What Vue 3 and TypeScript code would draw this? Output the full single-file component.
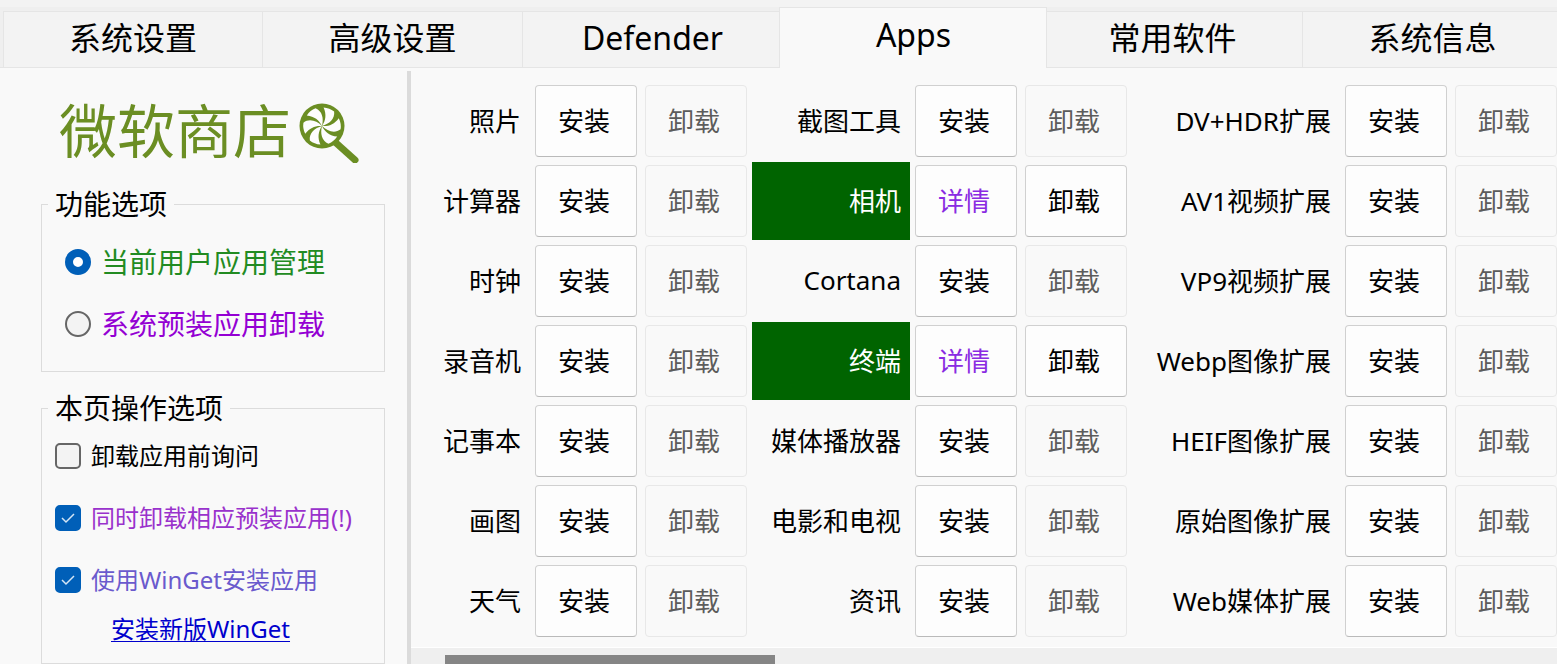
<script setup lang="ts">
import { ref } from 'vue'

interface AppEntry {
  name: string
  installed?: boolean
}

const tabs: string[] = ['系统设置', '高级设置', 'Defender', 'Apps', '常用软件', '系统信息']
const activeTab = ref<string>('Apps')

const scope = ref<string>('current')
const askFirst = ref<boolean>(false)
const removeProvisioned = ref<boolean>(true)
const useWinget = ref<boolean>(true)

const rows: AppEntry[][] = [
  [{ name: '照片' }, { name: '截图工具' }, { name: 'DV+HDR扩展' }],
  [{ name: '计算器' }, { name: '相机', installed: true }, { name: 'AV1视频扩展' }],
  [{ name: '时钟' }, { name: 'Cortana' }, { name: 'VP9视频扩展' }],
  [{ name: '录音机' }, { name: '终端', installed: true }, { name: 'Webp图像扩展' }],
  [{ name: '记事本' }, { name: '媒体播放器' }, { name: 'HEIF图像扩展' }],
  [{ name: '画图' }, { name: '电影和电视' }, { name: '原始图像扩展' }],
  [{ name: '天气' }, { name: '资讯' }, { name: 'Web媒体扩展' }],
]
const apps: AppEntry[] = rows.flat()

const blades: number[] = [8, 68, 128, 188, 248, 308]
</script>

<template>
  <div class="window">
    <nav class="tabs" role="tablist">
      <button
        v-for="tab in tabs"
        :key="tab"
        type="button"
        role="tab"
        class="tab"
        :class="{ active: tab === activeTab }"
        :aria-selected="tab === activeTab"
        @click="activeTab = tab"
      >
        {{ tab }}
      </button>
    </nav>

    <div class="content">
      <aside class="sidebar">
        <h1 class="title">
          <span>微软商店</span>
          <svg class="lollipop" viewBox="0 0 60 60" aria-hidden="true">
            <path d="M36 39 L56 57" stroke="#6b8e23" stroke-width="7" stroke-linecap="round" />
            <circle cx="23" cy="23" r="22.5" fill="#6b8e23" />
            <g transform="translate(23 23)" fill="#fdfdfd">
              <path
                v-for="angle in blades"
                :key="angle"
                :transform="`rotate(${angle})`"
                d="M0 0 C3 -6 3 -12 -1 -18.5 Q5 -19 10 -16 C12 -9 7 -3 0 0 Z"
              />
            </g>
          </svg>
        </h1>

        <fieldset class="group scope">
          <legend>功能选项</legend>
          <label class="option green">
            <input v-model="scope" type="radio" name="scope" value="current" />
            <span>当前用户应用管理</span>
          </label>
          <label class="option violet">
            <input v-model="scope" type="radio" name="scope" value="system" />
            <span>系统预装应用卸载</span>
          </label>
        </fieldset>

        <fieldset class="group page-options">
          <legend>本页操作选项</legend>
          <label class="option">
            <input v-model="askFirst" type="checkbox" />
            <span>卸载应用前询问</span>
          </label>
          <label class="option orchid">
            <input v-model="removeProvisioned" type="checkbox" />
            <span>同时卸载相应预装应用(!)</span>
          </label>
          <label class="option slate">
            <input v-model="useWinget" type="checkbox" />
            <span>使用WinGet安装应用</span>
          </label>
          <a class="link" href="#winget">安装新版WinGet</a>
        </fieldset>
      </aside>

      <main class="panel">
        <div class="apps">
          <template v-for="app in apps" :key="app.name">
            <span class="name" :class="{ installed: app.installed }">{{ app.name }}</span>
            <div class="actions">
              <button type="button" class="action" :class="{ detail: app.installed }">
                {{ app.installed ? '详情' : '安装' }}
              </button>
              <button type="button" class="action" :disabled="!app.installed">卸载</button>
            </div>
          </template>
        </div>
        <div class="scrollbar"><div class="thumb"></div></div>
      </main>
    </div>
  </div>
</template>

<style>
body {
  background: #f9f9f9;
  overflow: hidden;
}
</style>

<style scoped>
.window {
  display: flex;
  flex-direction: column;
  height: 100vh;
  overflow: hidden;
  background: #f9f9f9;
  color: #000;
  font-family: 'Noto Sans', 'Noto Sans CJK SC', sans-serif;
  font-size: 26px;
}

button {
  font-family: inherit;
  color: inherit;
  margin: 0;
}

.tabs {
  flex: none;
  display: grid;
  grid-template-columns: repeat(6, 1fr);
  height: 61px;
  margin-right: -6px;
  padding-left: 3px;
  border-top: 7px solid #f3f3f3;
  background: #efefef;
  box-shadow: inset 0 -1px #e5e5e5;
}

.tab {
  margin-top: 4px;
  padding: 0 0 4px;
  border: 1px solid #e5e5e5;
  border-left-width: 0;
  background: #f3f3f3;
  font-size: 32px;
  line-height: 48px;
}

.tab:first-child {
  border-left-width: 1px;
}

.tab.active {
  z-index: 1;
  margin: 0 -4px;
  padding: 0 0 7px 1px;
  border-left-width: 1px;
  border-bottom: 0;
  background: #f9f9f9;
}

.content {
  flex: 1;
  display: flex;
  min-height: 0;
}

.sidebar {
  flex: none;
  box-sizing: border-box;
  width: 411px;
  margin-top: 3px;
  padding: 27px 22px 0 41px;
  border-right: 4px solid #dbdbdb;
}

.title {
  display: flex;
  align-items: center;
  gap: 8px;
  margin: 0 0 22px;
  padding-left: 18px;
  color: #6b8e23;
  font-size: 58px;
  font-weight: 400;
  line-height: 70px;
}

.title span {
  padding-bottom: 4px;
  line-height: 66px;
}

.lollipop {
  width: 60px;
  height: 60px;
  margin: 5px 0;
  fill: none;
}

.group {
  box-sizing: border-box;
  min-width: 0;
  margin: 0 0 22px;
  padding: 0 6px;
  border: 1px solid #dcdcdc;
}

.group legend {
  padding: 0 7px;
  font-size: 28px;
  line-height: 28px;
}

.option {
  display: flex;
  align-items: center;
  gap: 10px;
  height: 62px;
  padding-left: 7px;
  font-size: 24px;
  white-space: nowrap;
}

.option span {
  padding-bottom: 4px;
}

.scope {
  height: 182px;
}

.scope .option {
  padding-left: 17px;
  font-size: 28px;
}

.scope .option span {
  padding-bottom: 2px;
}

.scope legend + .option {
  margin-top: 13px;
}

.page-options {
  height: 270px;
}

.page-options legend + .option {
  margin-top: 3px;
}

.green {
  color: #228b22;
}

.violet {
  color: #9400d3;
}

.orchid {
  color: #9932cc;
}

.slate {
  color: #6a5acd;
}

.option input {
  appearance: none;
  flex: none;
  box-sizing: border-box;
  width: 26px;
  height: 26px;
  margin: 0;
  border: 2px solid #666;
  border-radius: 5px;
  background: #f3f3f3;
}

.option input[type='radio'] {
  border-radius: 50%;
}

.option input[type='radio']:checked {
  border: 8px solid #005fb8;
  background: #fff;
}

.option input[type='checkbox']:checked {
  border-color: #005fb8;
  background: #005fb8
    url("data:image/svg+xml,%3Csvg xmlns='http://www.w3.org/2000/svg' viewBox='0 0 22 22'%3E%3Cpath d='M5 11l4 4 8-8' fill='none' stroke='%23d5e6f5' stroke-width='1.5'/%3E%3C/svg%3E")
    center / 22px 22px no-repeat;
}

.link {
  display: block;
  width: fit-content;
  margin-left: 63px;
  color: #0000cd;
  font-size: 24px;
  line-height: 36px;
  text-underline-offset: 3px;
  text-decoration-thickness: 1px;
}

.panel {
  flex: 1;
  display: flex;
  flex-direction: column;
  min-width: 0;
}

.apps {
  flex: none;
  display: grid;
  grid-template-columns: 119fr 212px 158fr 212px 208fr 212px;
  grid-auto-rows: 78px;
  gap: 2px 5px;
  padding: 14px 0 7px;
}

.name {
  display: flex;
  align-items: center;
  justify-content: flex-end;
  padding: 0 9px 2px 0;
  white-space: nowrap;
}

.name.installed {
  background: #006400;
  color: #fff;
}

.actions {
  display: flex;
  align-items: center;
  gap: 8px;
}

.action {
  flex: 1;
  height: 72px;
  padding: 0 4px 2px 0;
  border: 1px solid #d0d0d0;
  border-bottom-color: #bababa;
  border-radius: 4px;
  background: #fdfdfd;
  font-size: 26px;
}

.action.detail {
  color: #8a2be2;
}

.action:disabled {
  border-color: #e8e8e8;
  background: #f9f9f9;
  color: #5c5c5c;
}

.scrollbar {
  flex: 1;
  min-height: 16px;
  padding-top: 7px;
  border-top: 1px solid #fff;
  box-sizing: border-box;
  background: #efefef;
}

.thumb {
  width: 330px;
  height: 100%;
  margin-left: 34px;
  background: #858585;
}
</style>
